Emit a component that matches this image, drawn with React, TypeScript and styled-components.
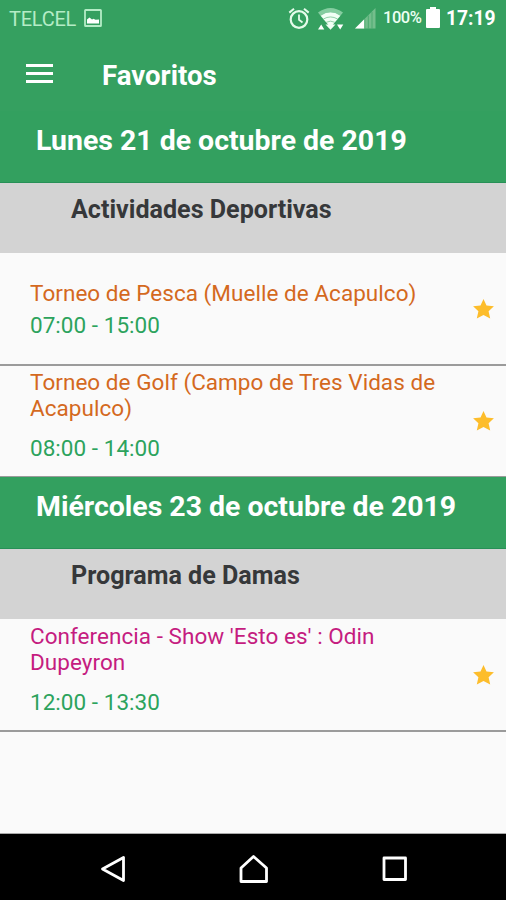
import React from 'react';
import styled, { createGlobalStyle } from 'styled-components';

const GlobalStyle = createGlobalStyle`
  * { box-sizing: border-box; }
  html, body { margin: 0; padding: 0; }
  body { font-family: Roboto, "Liberation Sans", sans-serif; background: #fafafa; }
`;

const Screen = styled.div`
  display: flex;
  flex-direction: column;
  width: 506px;
  height: 900px;
  overflow: hidden;
  background: #fafafa;
`;

const StatusBar = styled.div`
  display: flex;
  align-items: center;
  flex: none;
  height: 37px;
  padding: 0 11px 0 9px;
  background: #35a060;
  color: #fff;
  white-space: nowrap;
`;

const Carrier = styled.span`
  width: 75px;
  font-size: 20px;
  line-height: 24px;
  letter-spacing: -0.25px;
  color: #b4ecc6;
`;

const PictureIcon = styled.svg`
  display: block;
  margin: -1px auto 0 0;
`;

const StatusIcon = styled.svg<{ $gap: number }>`
  display: block;
  flex: none;
  margin-right: ${(p) => p.$gap}px;
`;

const Percent = styled.span`
  width: 39px;
  margin: -2px 4px 0 0;
  font-size: 16.5px;
  font-weight: 500;
  line-height: 24px;
  letter-spacing: -0.5px;
  color: #ecfff2;
`;

const Clock = styled.span`
  width: 49px;
  font-size: 19.3px;
  font-weight: 700;
  line-height: 24px;
`;

const AppBar = styled.header`
  display: flex;
  align-items: center;
  flex: none;
  height: 74px;
  padding: 0 26px;
  background: #35a060;
  color: #fff;
`;

const MenuButton = styled.button`
  display: flex;
  width: 76px;
  padding: 0;
  border: 0;
  background: none;
`;

const Title = styled.h1`
  margin: 3px 0 0;
  font-size: 27.6px;
  font-weight: 700;
  line-height: 32px;
`;

const Agenda = styled.main`
  flex: 1;
  min-height: 0;
  border-bottom: 1px solid #a9a9a9;
`;

const DateHeader = styled.h2`
  height: 72px;
  margin: 0;
  padding: 13px 36px 0;
  border-bottom: 1px solid #279057;
  background: #33a05f;
  color: #fff;
  font-size: 28.45px;
  font-weight: 700;
  line-height: 33px;
  white-space: nowrap;
`;

const CategoryHeader = styled.h3`
  height: 70px;
  margin: 0;
  padding: 12px 71px 0;
  background: #d3d3d3;
  color: #36383a;
  font-size: 25.1px;
  font-weight: 700;
  line-height: 30px;
  white-space: nowrap;
`;

const EventRow = styled.article`
  display: flex;
  align-items: center;
  justify-content: space-between;
  height: 113px;
  margin-bottom: -1px;
  padding: 0 12px 0 30px;
  border-bottom: 2px solid #9b9b9b;
`;

const EventText = styled.div<{ $wrapped: boolean }>`
  width: 412px;
  padding: ${(p) => (p.$wrapped ? '0 0 10px' : '2px 0 0')};
  font-size: 22.5px;
  letter-spacing: 0.04px;
`;

const EventName = styled.div<{ $color: string }>`
  color: ${(p) => p.$color};
  line-height: 26.5px;
`;

const EventTime = styled.div<{ $gap: number }>`
  margin-top: ${(p) => p.$gap}px;
  color: #2ca35d;
  line-height: 27px;
`;

const NavBar = styled.nav`
  display: flex;
  align-items: center;
  justify-content: space-between;
  flex: none;
  height: 66px;
  padding: 4px 96px 0;
  background: #000;
`;

const NavIcon = styled.svg`
  display: block;
  fill: none;
  stroke: #fff;
  stroke-width: 2.8;
  stroke-linejoin: round;
`;

const Star = () => (
  <svg width="21" height="20" viewBox="0 0 21 20">
    <path d="M10.5 0 13.5 6.4 20.9 7.2 15.6 12.2 17.2 19.6 10.5 16 3.8 19.6 5.4 12.2 .1 7.2 7.5 6.4Z" fill="#fdbd2b" />
  </svg>
);

type AgendaEvent = { lines: string[]; time: string; color: string };
type Day = { date: string; category: string; events: AgendaEvent[] };

const days: Day[] = [
  {
    date: 'Lunes 21 de octubre de 2019',
    category: 'Actividades Deportivas',
    events: [
      { lines: ['Torneo de Pesca (Muelle de Acapulco)'], time: '07:00 - 15:00', color: '#d4691e' },
      { lines: ['Torneo de Golf (Campo de Tres Vidas de', 'Acapulco)'], time: '08:00 - 14:00', color: '#d4691e' },
    ],
  },
  {
    date: 'Miércoles 23 de octubre de 2019',
    category: 'Programa de Damas',
    events: [
      { lines: ["Conferencia - Show 'Esto es' : Odin", 'Dupeyron'], time: '12:00 - 13:30', color: '#c51c80' },
    ],
  },
];

export default function App() {
  return (
    <Screen>
      <GlobalStyle />
      <StatusBar>
        <Carrier>TELCEL</Carrier>
        <PictureIcon width="18" height="18" viewBox="0 0 18 18">
          <rect x="1" y="1" width="16" height="16" rx="0.6" fill="none" stroke="#b4ecc6" strokeWidth="1.8" />
          <path d="M3 14.5V10.5l2.5-2 2.5 2 1.5-.8 2 1 3.5-.2v4Z" fill="#fff" />
        </PictureIcon>
        <StatusIcon $gap={7} width="22" height="22" viewBox="0 0 22 22" fill="none" stroke="#e5fbea">
          <circle cx="11" cy="11.5" r="8.3" strokeWidth="2.2" />
          <path d="M11 6.5v5.3l3.5 2.7" strokeWidth="1.8" />
          <path d="M1.3 4.6 6 .8M20.7 4.6 16 .8" strokeWidth="2" />
        </StatusIcon>
        <StatusIcon $gap={11} width="27" height="24" viewBox="0 0 27 24">
          <path d="M1 5.5Q13.5 -3.5 26 5.5L23.4 8.7Q13.5 1.8 3.6 8.7Z" fill="#85cda0" />
          <path d="M3.6 8.7Q13.5 1.8 23.4 8.7L13.5 20.5Z" fill="#f2fff5" />
          <path d="M6.4 12Q13.5 7.9 20.6 12M9.2 15.3Q13.5 13 17.8 15.3" fill="none" stroke="#79c393" strokeWidth="0.8" />
          <path d="M1 22.5 4.2 17.5 7.3 22.5ZM20 17.5h6.3L23.2 22.5Z" fill="#fff" />
          <path d="M8.5 17.5h10L13.5 22.7Z" fill="#f2fff5" />
        </StatusIcon>
        <StatusIcon $gap={7} width="21" height="21" viewBox="0 0 21 21">
          <path d="M0 20.5 20.5 0V20.5Z" fill="#74be8c" />
          <path d="M0 20.5 9.5 11V20.5Z" fill="#fff" />
          <path d="M9.8 11v10M13.3 7.5V21M17 4v17" fill="none" stroke="#4caa70" strokeWidth="1" />
        </StatusIcon>
        <Percent>100%</Percent>
        <StatusIcon $gap={6} width="14" height="23" viewBox="0 0 14 23">
          <path d="M4 0h6v2h3q1 0 1 1v17q0 1-1 1H1q-1 0-1-1V3q0-1 1-1h3Z" fill="#fff" />
        </StatusIcon>
        <Clock>17:19</Clock>
      </StatusBar>
      <AppBar>
        <MenuButton aria-label="Menú">
          <svg width="27" height="20" viewBox="0 0 27 20">
            <path d="M0 1.5h27M0 9.5h27M0 17.5h27" stroke="#fff" strokeWidth="3" />
          </svg>
        </MenuButton>
        <Title>Favoritos</Title>
      </AppBar>
      <Agenda>
        {days.map((day) => (
          <section key={day.date}>
            <DateHeader>{day.date}</DateHeader>
            <CategoryHeader>{day.category}</CategoryHeader>
            {day.events.map((event) => (
              <EventRow key={event.time}>
                <EventText $wrapped={event.lines.length > 1}>
                  {event.lines.map((line) => (
                    <EventName key={line} $color={event.color}>{line}</EventName>
                  ))}
                  <EventTime $gap={event.lines.length > 1 ? 13.5 : 5}>{event.time}</EventTime>
                </EventText>
                <Star />
              </EventRow>
            ))}
          </section>
        ))}
      </Agenda>
      <NavBar>
        <NavIcon width="30" height="30" viewBox="0 0 30 30">
          <path d="M6.5 15 27.5 3.5V26.5Z" />
        </NavIcon>
        <NavIcon width="30" height="30" viewBox="0 0 30 30">
          <path d="M15.5 2.5 28.5 14V27.5H3V14Z" />
        </NavIcon>
        <NavIcon width="30" height="30" viewBox="0 0 30 30">
          <rect x="4" y="4" width="21.5" height="21.5" />
        </NavIcon>
      </NavBar>
    </Screen>
  );
}
